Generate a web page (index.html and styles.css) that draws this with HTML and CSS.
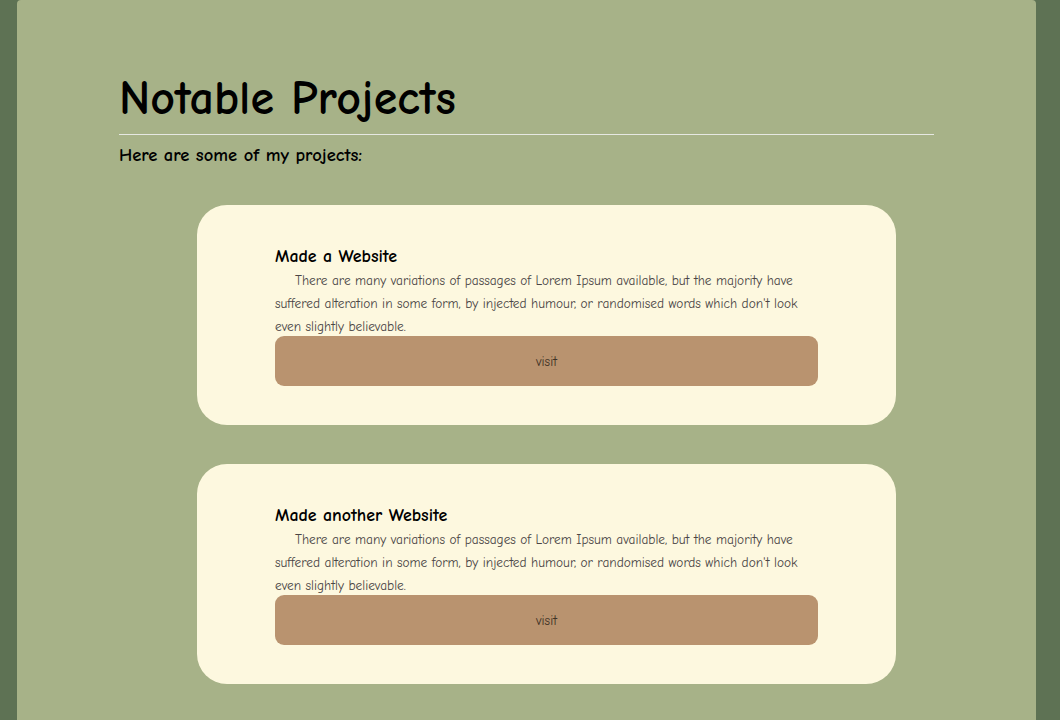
FILE: index.html
```html
<!DOCTYPE html>
<html lang="en">
<head>
<meta charset="utf-8">
<title>Notable Projects</title>
<link rel="stylesheet" href="styles.css">
</head>
<body>
<main class="page">
  <h1 class="page-title">Notable Projects</h1>
  <hr class="rule">
  <p class="intro">Here are some of my projects:</p>
  <section class="projects">
    <article class="card">
      <h2 class="card-title">Made a Website</h2>
      <p class="card-text">There are many variations of passages of Lorem Ipsum available, but the majority have suffered alteration in some form, by injected humour, or randomised words which don't look even slightly believable.</p>
      <a class="visit" href="#">visit</a>
    </article>
    <article class="card">
      <h2 class="card-title">Made another Website</h2>
      <p class="card-text">There are many variations of passages of Lorem Ipsum available, but the majority have suffered alteration in some form, by injected humour, or randomised words which don't look even slightly believable.</p>
      <a class="visit" href="#">visit</a>
    </article>
  </section>
</main>
</body>
</html>
```
FILE: styles.css
```css
html, body {
  margin: 0;
  padding: 0;
}
body {
  background: #5e7254;
  font-family: "Comic Neue", "Comic Sans MS", "Open Sans", sans-serif;
  height: 720px;
  overflow: hidden;
}
.page {
  margin-left: 17px;
  width: 1019px;
  min-height: 760px;
  background: #a7b288;
  border-radius: 4px;
  padding: 64px 102px 0 102px;
  box-sizing: border-box;
}
.page-title {
  margin: 0;
  font-size: 48px;
  font-weight: 700;
  line-height: 70px;
  color: #000;
}
.rule {
  margin: 0;
  border: 0;
  height: 1px;
  background: #e6e8e2;
}
.intro {
  margin: 9px 0 0 0;
  font-size: 18.5px;
  font-weight: 700;
  line-height: 22px;
  color: #000;
}
.projects {
  display: flex;
  flex-direction: column;
  gap: 39px;
  margin: 39px 38px 0 78px;
}
.card {
  background: #fdf8df;
  border-radius: 30px;
  padding: 40px 78px 39px 78px;
  height: 220px;
  box-sizing: border-box;
}
.card-title {
  margin: 0;
  font-size: 17.9px;
  font-weight: 700;
  line-height: 22px;
  color: #000;
}
.card-text {
  margin: 2px 0 -2px 0;
  font-size: 13.35px;
  line-height: 23px;
  color: #4a4545;
  text-indent: 20px;
  padding-right: 20px;
}
.visit {
  display: flex;
  align-items: center;
  justify-content: center;
  height: 50px;
  background: #b9936f;
  border-radius: 9px;
  color: #3f3125;
  font-size: 13.35px;
  text-decoration: none;
}
```
